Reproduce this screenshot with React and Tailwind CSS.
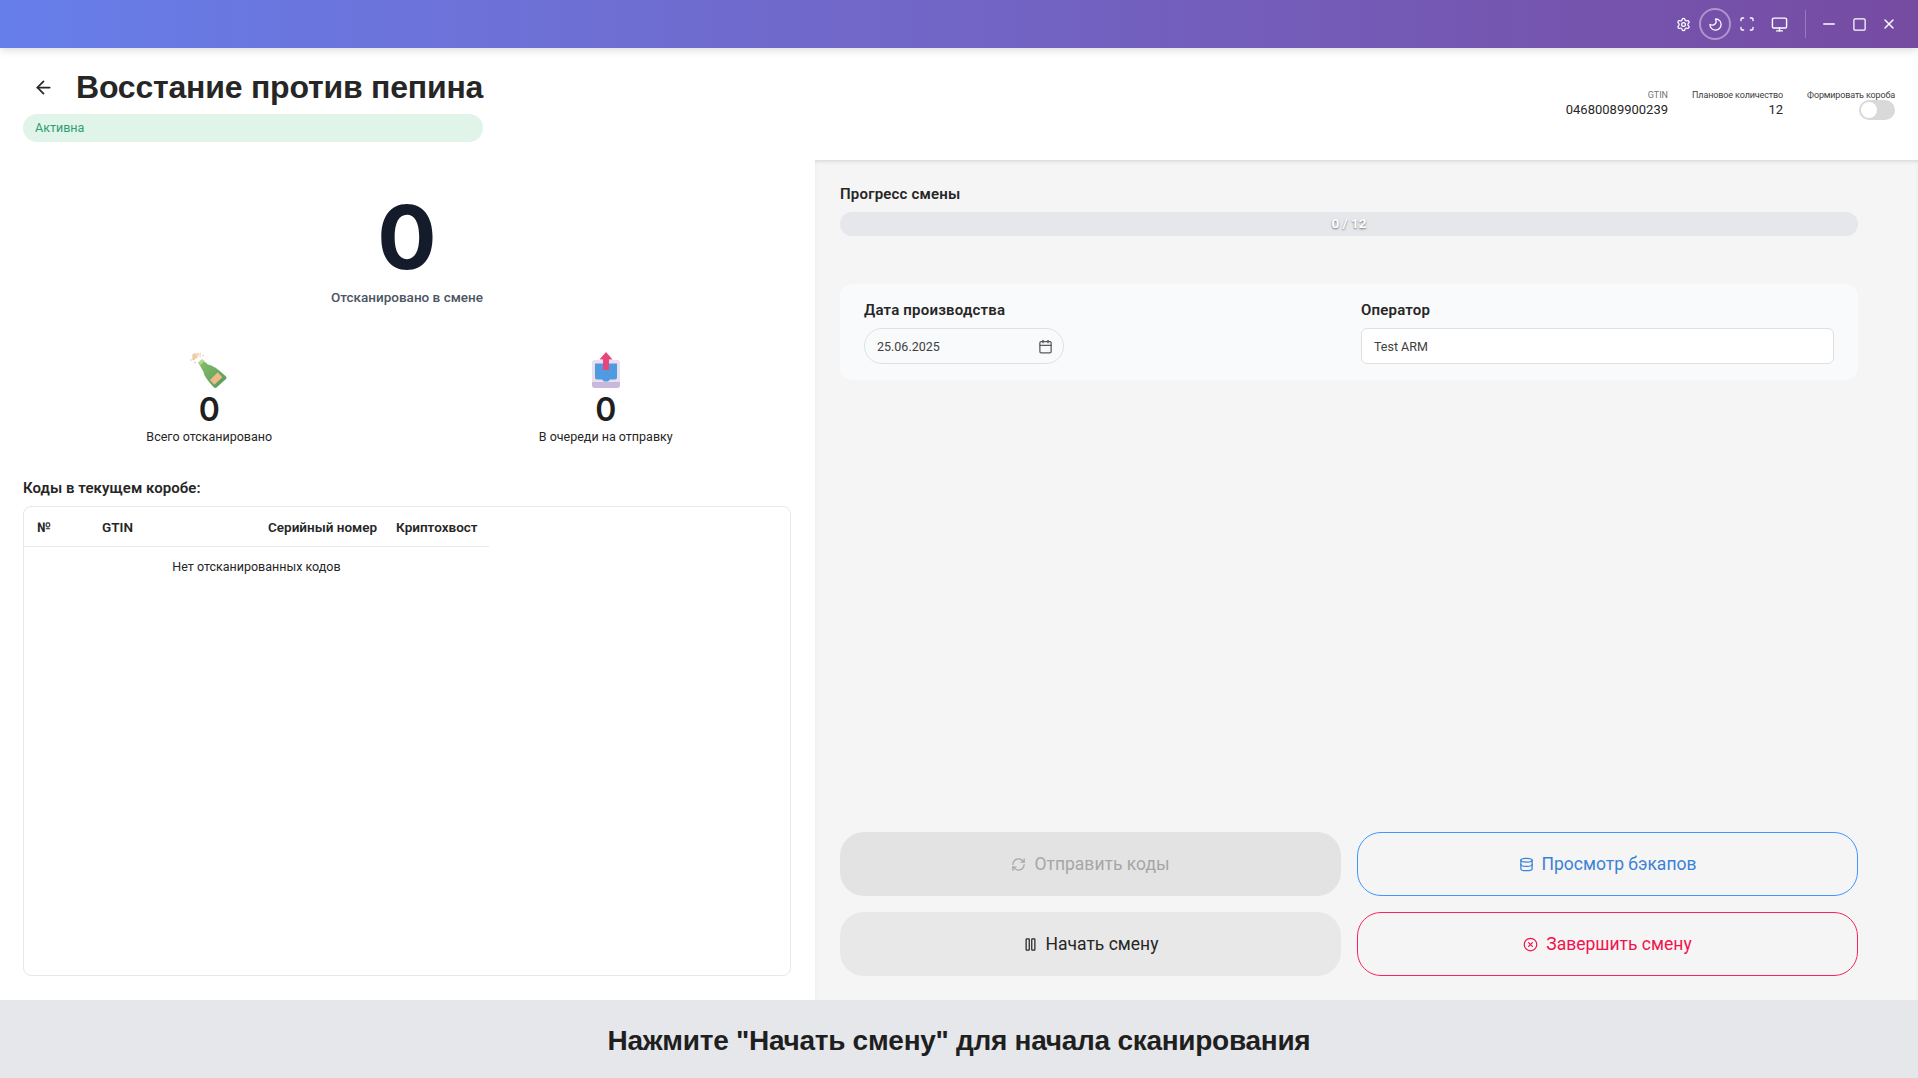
import React from "react";
import { ArrowLeft, Settings, Moon, Scan, Monitor, Minus, Square, X, RefreshCw, Database, Pause, CircleX, Calendar } from "lucide-react";

function Bottle() {
  return (
    <svg width="38" height="36" viewBox="0 0 38 36" className="block">
      <defs>
        <linearGradient id="bottleGreen" x1="0" y1="0" x2="1" y2="1">
          <stop offset="0" stopColor="#8cbf6c" />
          <stop offset="1" stopColor="#4f9b58" />
        </linearGradient>
      </defs>
      <path d="M8.5 11L12 7.5L18 12.5Q24 13 36 24.5Q37 26 36 27L26.5 35.5Q25 36.5 23.5 35Q14 25 13.5 20Z" fill="url(#bottleGreen)" />
      <path d="M8 10.5L12 7L14.5 9.2L10.3 13Z" fill="#b9d48c" />
      <path d="M27.7 20.3L32.3 25.3L24.3 32.7L20 28Z" fill="#f0b98a" />
      <circle cx="5" cy="4" r="2.8" fill="#eccda6" />
      <circle cx="7.5" cy="2.5" r="1.8" fill="#f3dcbc" />
      <circle cx="3.5" cy="7" r="1.2" fill="#e6bf98" />
      <rect x="9.5" y="0.5" width="1.2" height="5" fill="#eed8c2" />
      <circle cx="13" cy="3.5" r="0.8" fill="#e8c4ac" />
      <circle cx="1" cy="8" r="0.8" fill="#e8b8a8" />
      <circle cx="5" cy="10.5" r="0.8" fill="#e8c0b0" />
    </svg>
  );
}

function Outbox() {
  return (
    <svg width="30" height="36" viewBox="0 0 30 36" className="block">
      <rect x="1" y="8" width="28" height="27.5" rx="3" fill="#e8e0ec" />
      <path d="M1 30h28v3a3 3 0 0 1-3 3H4a3 3 0 0 1-3-3z" fill="#c9b8dc" />
      <path d="M4 11.5h22v14a2 2 0 0 1-2 2h-5l-2 2h-4l-2-2H6a2 2 0 0 1-2-2z" fill="#4f9ae0" />
      <path d="M15 0L21.5 7.5H18V18H12V7.5H8.5Z" fill="#e8457a" />
    </svg>
  );
}

function Stat({ icon, label }) {
  return (
    <div className="flex flex-col items-center">
      <div className="h-[36px] flex items-center justify-center">{icon}</div>
      <div className="text-[32px] leading-[44px] font-semibold text-[#1f1f1f] font-['Inter',sans-serif]">0</div>
      <div className="mt-[-5px] text-[12.5px] leading-[20px] text-[#262626]">{label}</div>
    </div>
  );
}

function Th({ className, children }) {
  return <th className={"h-[39px] pt-[2px] px-[13px] text-left text-[13.5px] font-semibold whitespace-nowrap text-[#262626] border-b border-[#e8e8e8] " + className}>{children}</th>;
}

export default function App() {
  return (
    <div className="h-[1078px] flex flex-col bg-white font-['Roboto',sans-serif] text-[#262626] overflow-hidden">
      <div className="relative z-10 h-[48px] shrink-0 flex items-center justify-end bg-gradient-to-r from-[#667eea] to-[#764ba2] shadow-[0_2px_8px_rgba(0,0,0,0.15)] text-white">
        <div className="flex items-center">
          <div className="w-[32px] flex justify-center"><Settings size={15} /></div>
          <div className="w-[32px] h-[32px] rounded-full border-2 border-white/40 flex items-center justify-center"><Moon size={15} className="-scale-x-100" /></div>
          <div className="w-[32px] flex justify-center"><Scan size={16} /></div>
          <div className="w-[32px] flex justify-center"><Monitor size={17} /></div>
        </div>
        <div className="w-px h-[28px] bg-white/25 ml-[10px] mr-[8px]" />
        <div className="flex items-center pr-[14px]">
          <div className="w-[30px] flex justify-center"><Minus size={18} /></div>
          <div className="w-[30px] flex justify-center"><Square size={15} /></div>
          <div className="w-[30px] flex justify-center"><X size={16} /></div>
        </div>
      </div>

      <div className="h-[112px] shrink-0 flex justify-between pl-[23px] pr-[23px] pt-[16px]">
        <div className="flex flex-col">
          <div className="flex items-center h-[46px]">
            <ArrowLeft size={21} className="ml-[10px] mr-[22px] text-[#262626]" />
            <h1 className="text-[32px] font-bold tracking-[-0.2px] text-[#262626] font-['Liberation_Sans',sans-serif]">Восстание против пепина</h1>
          </div>
          <div className="mt-[4px] h-[28px] rounded-full bg-[#e0f4ea] text-[#2f9e75] text-[12.5px] flex items-center pl-[12px]">Активна</div>
        </div>
        <div className="flex gap-6 pt-[24px]">
          <div className="text-right">
            <div className="text-[9px] leading-[14px] text-[#737373]">GTIN</div>
            <div className="mt-[-1px] text-[13px] leading-[18px] text-[#262626]">04680089900239</div>
          </div>
          <div className="text-right">
            <div className="text-[9px] leading-[14px] tracking-[-0.12px] text-[#404040]">Плановое количество</div>
            <div className="mt-[-1px] text-[13px] leading-[18px] text-[#262626]">12</div>
          </div>
          <div className="flex flex-col items-end">
            <div className="text-[9px] leading-[14px] tracking-[-0.15px] text-[#404040]">Формировать короба</div>
            <div className="mt-[-2px] w-[36px] h-[20px] rounded-full bg-[#d9d9d9] flex items-center pl-[2px]">
              <div className="w-[16px] h-[16px] rounded-full bg-white" />
            </div>
          </div>
        </div>
      </div>

      <div className="flex-1 flex min-h-0">
        <div className="w-[815px] shrink-0 flex flex-col pl-[23px] pr-[24px] pb-[24px]">
          <div className="flex flex-col items-center">
            <div className="mt-[41px] h-[71px] flex items-center text-[88px] font-bold text-[#141b2b] font-['Inter',sans-serif] leading-none">0</div>
            <div className="mt-[15px] text-[13.5px] leading-[20px] font-medium text-[#4b5563]">Отсканировано в смене</div>
          </div>
          <div className="mt-[45px] ml-[-12px] mr-[-13px] grid grid-cols-2">
            <Stat icon={<Bottle />} label="Всего отсканировано" />
            <Stat icon={<Outbox />} label="В очереди на отправку" />
          </div>
          <div className="mt-[30px] text-[15px] leading-[22px] font-semibold tracking-[0.05px] text-[#262626]">Коды в текущем коробе:</div>
          <div className="mt-[7px] flex-1 rounded-[8px] border border-[#e8e8e8] overflow-hidden">
            <table className="w-[465px] table-fixed border-collapse">
              <thead>
                <tr>
                  <Th className="w-[65px]">№</Th>
                  <Th className="w-[166px]">GTIN</Th>
                  <Th className="w-[128px]">Серийный номер</Th>
                  <Th>Криптохвост</Th>
                </tr>
              </thead>
              <tbody>
                <tr>
                  <td colSpan={4} className="h-[41px] pt-[2px] text-center text-[12.5px] text-[#262626]">Нет отсканированных кодов</td>
                </tr>
              </tbody>
            </table>
          </div>
        </div>

        <div className="flex-1 min-w-0 flex flex-col bg-[#f5f5f5] shadow-[inset_0_3px_4px_-2px_rgba(0,0,0,0.15)] pl-[25px] pr-[60px] pt-[23px] pb-[24px]">
          <div className="text-[15px] leading-[22px] font-semibold tracking-[0.2px] text-[#262626]">Прогресс смены</div>
          <div className="mt-[7px] h-[24px] pb-[1px] rounded-full bg-[#e5e7eb] flex items-center justify-center text-[13.5px] font-bold text-white [text-shadow:0_1px_2px_rgba(0,0,0,0.5)]">0 / 12</div>
          <div className="mt-[48px] h-[96px] rounded-[12px] bg-[#f9fafb] grid grid-cols-[497px_1fr] px-[24px] pt-[16px]">
            <div>
              <div className="text-[15px] leading-[20px] font-semibold tracking-[0.2px] text-[#262626]">Дата производства</div>
              <div className="mt-[8px] w-[200px] h-[36px] rounded-full border border-[#e0e0e0] flex items-center justify-between pl-[12px] pr-[10px] text-[12.5px] text-[#404040]">
                <span className="pt-[2px]">25.06.2025</span>
                <Calendar size={15} className="text-[#595959]" />
              </div>
            </div>
            <div>
              <div className="text-[15px] leading-[20px] font-semibold tracking-[0.2px] text-[#262626]">Оператор</div>
              <div className="mt-[8px] h-[36px] pt-[2px] rounded-[6px] border border-[#e0e0e0] bg-white flex items-center px-[12px] text-[12.5px] text-[#404040]">Test ARM</div>
            </div>
          </div>
          <div className="flex-1" />
          <div className="grid grid-cols-2 gap-x-[16px] gap-y-[16px]">
            <div className="h-[64px] rounded-[24px] bg-[#e3e3e3] flex items-center justify-center gap-[8px] text-[17.5px] text-[#a6a6a6]"><RefreshCw size={15} />Отправить коды</div>
            <div className="h-[64px] rounded-[24px] border border-[#4096ff] flex items-center justify-center gap-[8px] text-[17.5px] text-[#3b82d6]"><Database size={15} />Просмотр бэкапов</div>
            <div className="h-[64px] rounded-[24px] bg-[#e8e8e8] flex items-center justify-center gap-[8px] text-[17.5px] text-[#262626]"><Pause size={15} />Начать смену</div>
            <div className="h-[64px] rounded-[24px] border border-[#f5265f] flex items-center justify-center gap-[8px] text-[17.5px] text-[#f0134f]"><CircleX size={15} />Завершить смену</div>
          </div>
        </div>
      </div>

      <div className="h-[78px] pt-[4px] shrink-0 bg-[#e5e7eb] flex items-center justify-center text-[28px] font-bold tracking-[-0.28px] text-[#1f1f1f] font-['Liberation_Sans',sans-serif]">Нажмите "Начать смену" для начала сканирования</div>
    </div>
  );
}
